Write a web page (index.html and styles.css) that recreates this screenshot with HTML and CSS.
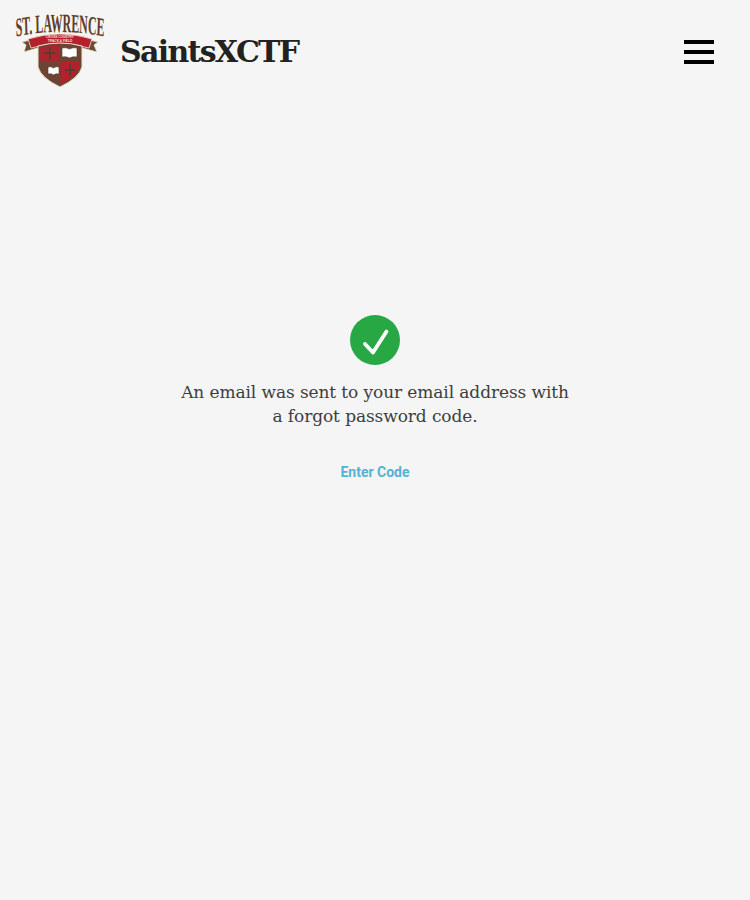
FILE: index.html
```html
<!DOCTYPE html>
<html>
<head>
  <meta charset="UTF-8" />
  <title>SaintsXCTF</title>
  <link rel="stylesheet" href="styles.css">
</head>
<body>
  <header class="site-header">
    <svg class="logo" viewBox="0 0 92 78" width="92" height="78">
      <defs>
        <path id="logoArc" d="M1 43 Q170 27 340 43" fill="none" />
      </defs>
      <g transform="scale(0.27,0.6)">
        <text class="logo-title"><textPath href="#logoArc" startOffset="50%" text-anchor="middle">ST. LAWRENCE</textPath></text>
      </g>
      <path d="M8 31 Q46 19 84 31 L80 34 L83 41 L72 38 Q46 30 20 38 L10 41 L12 34 Z" fill="#6b4a36" stroke="#f0e4cc" stroke-width="0.8" />
      <path d="M14 28 Q46 18 78 28 L75 37 Q46 28 17 37 Z" fill="#b5202f" stroke="#f0e4cc" stroke-width="0.8" />
      <text class="logo-banner" x="46" y="26.800" text-anchor="middle">CROSS COUNTRY</text>
      <text class="logo-banner" x="46" y="30.500" text-anchor="middle">TRACK &amp; FIELD</text>
      <path d="M24 35 Q46 29 68 35 L68 56 Q65 67 46 76 Q27 67 24 56 Z" fill="#6b4433" stroke="#f0e4cc" stroke-width="1" />
      <path d="M26 36.500 Q36 34 45.500 33.500 L45.500 50 L26 50 Z" fill="#a92530" />
      <path d="M46.500 50 L66 50 L66 55.500 Q63 65 46.500 73.500 Z" fill="#b5202f" />
      <path d="M36 36 V48 M30.500 42 H41.500 M56 53 V65 M50.500 59 H61.500" stroke="#5c3a2c" stroke-width="2" fill="none" />
      <path d="M48 37 Q52 36 55.500 38 Q59 36 63 37 V46 Q59 45 55.500 47 Q52 45 48 46 Z" fill="#fff" stroke="#5c3a2c" stroke-width="0.6" />
      <path d="M34 56 Q37 55 39.500 57 Q42 55 45 56 V63 Q42 62 39.500 64 Q37 62 34 63 Z" fill="#fff" stroke="#5c3a2c" stroke-width="0.6" />
    </svg>
    <h1 class="site-title">SaintsXCTF</h1>
    <div class="hamburger">
      <span></span>
      <span></span>
      <span></span>
    </div>
  </header>
  <main class="message">
    <svg class="check" viewBox="0 0 50 50" width="50" height="50">
      <circle cx="25" cy="25" r="25" fill="#28a745" />
      <path d="M15 29 L23 37.500 L36.500 16.500" fill="none" stroke="#fff" stroke-width="3.800" stroke-linecap="round" stroke-linejoin="round" />
    </svg>
    <p class="message-text">An email was sent to your email address with<br />a forgot password code.</p>
    <a class="enter-code" href="#">Enter Code</a>
  </main>
</body>
</html>
```

FILE: styles.css
```css
html {
  height: 100%;
}
body {
  margin: 0;
  min-height: 100%;
  background-color: #f5f5f5;
  font-family: "DejaVu Serif", serif;
  color: #333;
}
.site-header {
  display: flex;
  align-items: center;
  height: 103px;
  padding: 0 36px 0 14px;
}
.logo {
  flex: none;
  margin-top: -3px;
  overflow: visible;
}
.site-title {
  margin: 0 0 0 14px;
  flex: 1;
  font-size: 30px;
  font-weight: bold;
  letter-spacing: -1.7px;
  color: #222;
}
.hamburger {
  display: flex;
  flex-direction: column;
  gap: 6px;
  width: 30px;
}
.hamburger span {
  display: block;
  height: 4px;
  background-color: #000;
}
.logo-title {
  font-family: "Liberation Serif", serif;
  font-size: 44px;
  font-weight: bold;
  fill: #5f3c2c;
  stroke: #f0e4cc;
  stroke-width: 1px;
  paint-order: stroke;
}
.logo-banner {
  font-family: "Liberation Sans", sans-serif;
  font-size: 3.200px;
  font-weight: bold;
  fill: #f5e3d3;
}
.message {
  display: flex;
  flex-direction: column;
  align-items: center;
  padding-top: 212px;
}
.check {
  display: block;
}
.message-text {
  margin: 15px 0 0;
  font-size: 17px;
  letter-spacing: -0.1px;
  line-height: 24px;
  text-align: center;
  color: #3d3d3d;
}
.enter-code {
  margin-top: 35px;
  font-family: Roboto, sans-serif;
  font-size: 14px;
  font-weight: bold;
  line-height: 18px;
  color: #56b2d3;
  text-decoration: none;
}
```
